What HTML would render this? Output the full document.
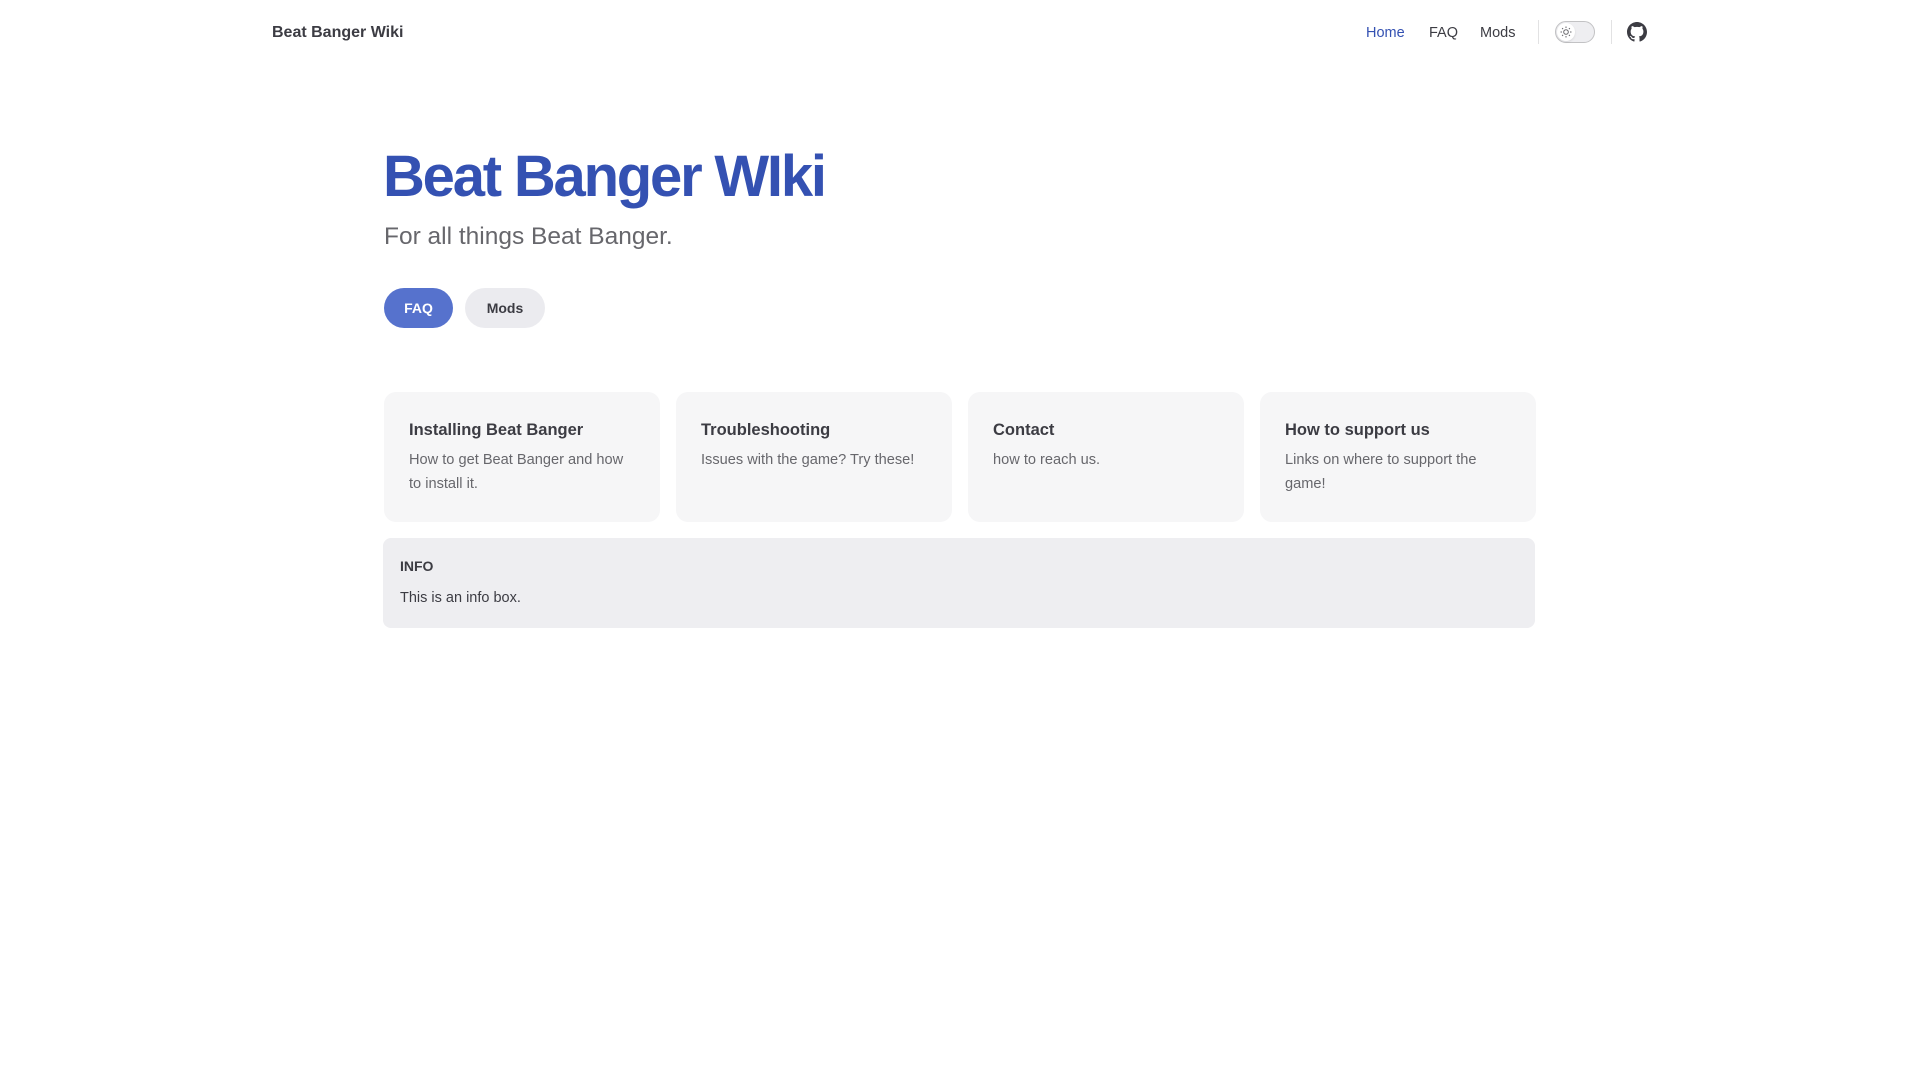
<!DOCTYPE html>
<html><head><meta charset="utf-8"><style>
*{box-sizing:border-box;margin:0;padding:0}
body{width:1920px;height:1080px;background:#fff;font-family:"Liberation Sans",sans-serif;color:#3c3c43;position:relative;overflow:hidden}
.brand{position:absolute;left:272px;top:22px;font-size:16px;font-weight:bold;color:#3c3c43;line-height:22px}
.nav{position:absolute;top:22px;font-size:14.5px;line-height:22px;font-weight:500;color:#3c3c43}
.sep{position:absolute;top:20px;width:1px;height:24px;background:#e2e2e3}
.tog{position:absolute;left:1555px;top:21px;width:40px;height:22px;border-radius:11px;border:1px solid #c2c2c4;background:#eeeef1}
.knob{position:absolute;left:1px;top:1px;width:18px;height:18px;border-radius:50%;background:#fff;box-shadow:0 1px 2px rgba(0,0,0,.1)}
h1{position:absolute;left:383px;top:141px;font-size:58px;line-height:72px;font-weight:bold;color:#3451b2;letter-spacing:-2.2px;white-space:nowrap}
.tag{position:absolute;left:384px;top:220px;font-size:24.5px;line-height:34px;color:#67676c}
.btn{position:absolute;top:288px;height:40px;border-radius:20px;font-size:14px;font-weight:bold;line-height:40px;text-align:center}
.card{position:absolute;top:392px;height:130px;background:#f6f6f7;border-radius:12px;padding:24px 24px 24px 25px}
.card h3{font-size:16.5px;line-height:28px;font-weight:bold;color:#3c3c43}
.card p{font-size:14.6px;line-height:24px;color:#67676c;margin-top:4px}
.info{position:absolute;left:383px;top:538px;width:1152px;height:90px;background:#eeeef1;border-radius:8px;padding:16px 17px}
.info b{display:block;font-size:14px;line-height:24px;color:#3c3c43}
.info p{font-size:14.5px;line-height:24px;margin-top:8px;color:#3c3c43}
</style></head><body>
<div class="brand">Beat Banger Wiki</div>
<div class="nav" style="left:1366px;color:#3451b2">Home</div>
<div class="nav" style="left:1429px">FAQ</div>
<div class="nav" style="left:1480px">Mods</div>
<div class="sep" style="left:1538px"></div>
<div class="tog"><div class="knob"><svg width="18" height="18" viewBox="0 0 18 18"><circle cx="9" cy="9" r="2.3" fill="none" stroke="#67676c" stroke-width="1"/><g stroke="#67676c" stroke-width="1"><path d="M9 3.5v1.5M9 13v1.5M3.5 9H5M13 9h1.5M5.1 5.1l1 1M11.9 11.9l1 1M5.1 12.9l1-1M11.9 6.1l1-1"/></g></svg></div></div>
<div class="sep" style="left:1611px"></div>
<svg style="position:absolute;left:1627px;top:22px" width="20" height="20" viewBox="0 0 16 16"><path fill="#3c3c43" d="M8 0C3.58 0 0 3.58 0 8c0 3.54 2.29 6.53 5.47 7.59.4.07.55-.17.55-.38 0-.19-.01-.82-.01-1.49-2.01.37-2.53-.49-2.69-.94-.09-.23-.48-.94-.82-1.13-.28-.15-.68-.52-.01-.53.63-.01 1.08.58 1.23.82.72 1.21 1.87.87 2.33.66.07-.52.28-.87.51-1.07-1.78-.2-3.64-.89-3.64-3.95 0-.87.31-1.59.82-2.15-.08-.2-.36-1.02.08-2.12 0 0 .67-.21 2.2.82.64-.18 1.32-.27 2-.27.68 0 1.36.09 2 .27 1.53-1.04 2.2-.82 2.2-.82.44 1.1.16 1.92.08 2.12.51.56.82 1.27.82 2.15 0 3.07-1.87 3.75-3.65 3.95.29.25.54.73.54 1.48 0 1.07-.01 1.93-.01 2.2 0 .21.15.46.55.38A8.013 8.013 0 0 0 16 8c0-4.42-3.58-8-8-8z"/></svg>
<h1>Beat Banger WIki</h1>
<div class="tag">For all things Beat Banger.</div>
<div class="btn" style="left:384px;width:69px;background:#5672cd;color:#fff">FAQ</div>
<div class="btn" style="left:465px;width:80px;background:#ebebef;color:#3c3c43">Mods</div>
<div class="card" style="left:384px;width:276px"><h3>Installing Beat Banger</h3><p>How to get Beat Banger and how to install it.</p></div>
<div class="card" style="left:676px;width:276px"><h3>Troubleshooting</h3><p>Issues with the game? Try these!</p></div>
<div class="card" style="left:968px;width:276px"><h3>Contact</h3><p>how to reach us.</p></div>
<div class="card" style="left:1260px;width:276px"><h3>How to support us</h3><p>Links on where to support the game!</p></div>
<div class="info"><b>INFO</b><p>This is an info box.</p></div>
</body></html>
